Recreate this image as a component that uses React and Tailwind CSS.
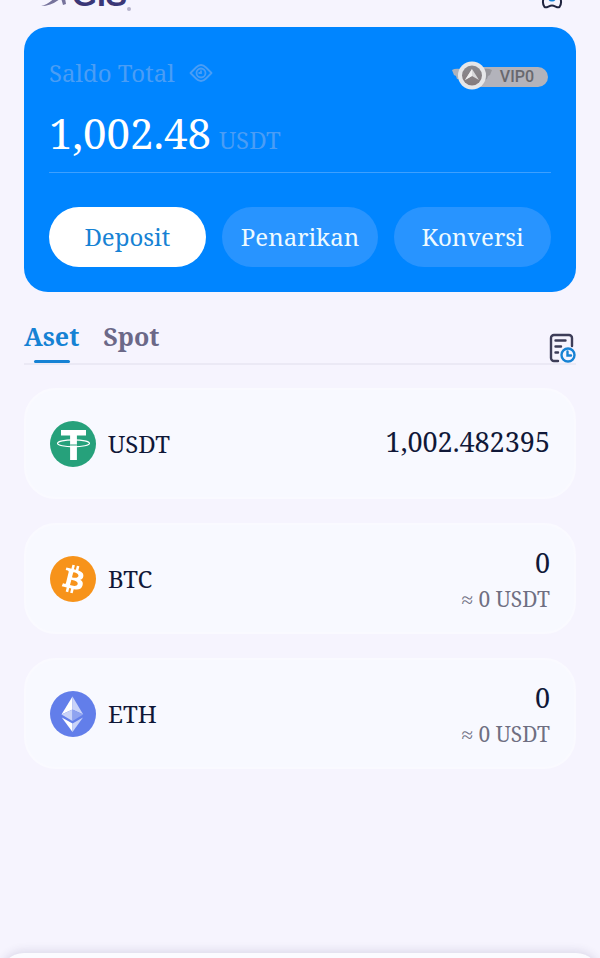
import React, { useState } from 'react';

const UsdtIcon = () => (
  <svg viewBox="0 0 46 46" className="size-[46px]" aria-hidden="true">
    <circle cx="23" cy="23" r="23" fill="#26a17b" />
    <path d="M11 9h25v5.500h-9.100V39h-6.800V14.500H11z" fill="#fff" />
    <ellipse cx="23.500" cy="22.300" rx="16" ry="3.500" fill="none" stroke="#fff" strokeWidth="1.200" />
    <path d="M20.100 24h6.800" stroke="#26a17b" strokeWidth="1" />
  </svg>
);

const BtcIcon = () => (
  <svg viewBox="0 0 32 32" className="size-[46px]" aria-hidden="true">
    <circle cx="16" cy="16" r="16" fill="#f7931a" />
    <path
      d="M23.189 14.02c.314-2.096-1.283-3.223-3.465-3.975l.708-2.84-1.728-.43-.69 2.765c-.454-.114-.92-.22-1.385-.326l.695-2.783L15.596 6l-.708 2.839c-.376-.086-.746-.17-1.104-.26l.002-.009-2.384-.595-.46 1.846s1.283.294 1.256.312c.7.175.826.638.805 1.006l-.806 3.235c.048.012.11.03.18.057l-.183-.045-1.13 4.532c-.086.212-.303.531-.793.41.018.025-1.256-.313-1.256-.313l-.858 1.978 2.25.561c.418.105.828.215 1.231.318l-.715 2.872 1.727.43.708-2.84c.472.127.93.245 1.378.357l-.706 2.828 1.728.43.715-2.866c2.948.558 5.164.333 6.097-2.333.752-2.146-.037-3.385-1.588-4.192 1.13-.26 1.98-1.003 2.207-2.538zm-3.95 5.538c-.533 2.147-4.148.986-5.32.695l.95-3.805c1.172.293 4.929.872 4.37 3.11zm.535-5.569c-.487 1.953-3.495.96-4.47.717l.86-3.45c.975.243 4.118.696 3.61 2.733z"
      fill="#fff"
    />
  </svg>
);

const EthIcon = () => (
  <svg viewBox="0 0 46 46" className="size-[46px]" aria-hidden="true">
    <circle cx="23" cy="23" r="23" fill="#627eea" />
    <path d="M22.500 5.500 11.500 23.500l11-5z" fill="#fff" />
    <path d="M22.500 5.500v13l10.700 5z" fill="#c9d3f8" />
    <path d="M11.500 23.500l11-5v11.500z" fill="#c9d3f8" />
    <path d="M33.200 23.500l-10.700-5v11.500z" fill="#8fa3f0" />
    <path d="M11.800 26.500l10.700 6v8.500z" fill="#fff" />
    <path d="M33 26.500l-10.500 6v8.500z" fill="#c9d3f8" />
  </svg>
);

const EyeIcon = () => (
  <svg viewBox="0 0 24 20" className="h-5 w-6" fill="none" stroke="currentColor" strokeWidth="1.800" aria-hidden="true">
    <path d="M1.500 10l5.500-5.500Q9.500 2 12 2t5 2.500l5.500 5.500-5.500 5.500Q14.500 18 12 18t-5-2.500z" strokeLinejoin="round" />
    <circle cx="12" cy="10" r="4.500" />
    <path d="M12 7.500V10H9.500" />
  </svg>
);

const SettingsIcon = () => (
  <svg viewBox="0 0 24 24" className="size-6" fill="none" aria-hidden="true">
    <path
      d="M12 2.500c3 0 5.500-2 7.500-.5 1.500 2 2 5 .5 8 1.500 4 1 8-.5 10-2 1.500-4.500-1.500-7.500-1.500s-5.500 3-7.500 1.500c-1.500-2-2-6-.5-10-1.500-3-1-6 .5-8 2-1.500 4.500.5 7.500.5z"
      stroke="#20243f"
      strokeWidth="2"
    />
    <circle cx="12" cy="10.500" r="3" stroke="#1682d4" strokeWidth="2" />
  </svg>
);

const HistoryIcon = () => (
  <svg viewBox="0 0 27 30" className="h-[30px] w-[27px]" fill="none" strokeWidth="2.400" strokeLinecap="round" aria-hidden="true">
    <g stroke="#3d3d58">
      <path d="M9 28H5a3 3 0 0 1-3-3V5a3 3 0 0 1 3-3h15a3 3 0 0 1 3 3v8" />
      <path d="M6.500 7.500h10M6.500 13.500H12M6.500 19.500H9" />
    </g>
    <g stroke="#1682d4">
      <circle cx="19" cy="22" r="6.500" />
      <path d="M18.500 18.500v4h3.500" />
    </g>
  </svg>
);

const VipBadge = () => (
  <div className="relative mr-[3px] mb-0.5 flex h-5 w-[84px] items-center justify-end rounded-full bg-[#b3b3bb] pr-3.5">
    <svg viewBox="0 0 42 30" className="absolute -top-1.5 -left-3 h-[30px] w-[42px]" aria-hidden="true">
      <defs>
        <linearGradient id="medal" x1="0" y1="0" x2="0" y2="1">
          <stop offset="0" stopColor="#8a8a90" />
          <stop offset="1" stopColor="#857b7c" />
        </linearGradient>
      </defs>
      <path d="M0 9q3-2 9-1l1 11-5-1-1-3-2-1z" fill="#aeb2bb" />
      <path d="M40 9q-4-2-9-1l-1 12 5-2 1-3 2-1z" fill="#96969c" />
      <circle cx="20" cy="14.500" r="14" fill="#e6e7e9" />
      <circle cx="20" cy="14.500" r="10" fill="url(#medal)" />
      <path d="M20 8l7 11-7-4-7 4z" fill="#d9d9db" />
      <path d="M20 8v7l-7 4z" fill="#efeff0" />
    </svg>
    <span className="font-['Roboto',sans-serif] text-[16px] leading-5 font-medium text-[#68686e]">VIP0</span>
  </div>
);

const assets = [
  { symbol: 'USDT', amount: '1,002.482395', value: null, Icon: UsdtIcon },
  { symbol: 'BTC', amount: '0', value: '≈ 0 USDT', Icon: BtcIcon },
  { symbol: 'ETH', amount: '0', value: '≈ 0 USDT', Icon: EthIcon },
];

const actions = ['Deposit', 'Penarikan', 'Konversi'];
const tabs = ['Aset', 'Spot'];

const App = () => {
  const [activeTab, setActiveTab] = useState('Aset');

  return (
    <div className="min-h-screen bg-[#f6f4fe] font-['Noto_Serif','Droid_Serif','Liberation_Serif',serif] text-[#101838]">
      <header className="flex h-[27px] items-end justify-between overflow-hidden pr-9 pb-4 pl-10">
        <div className="flex items-end">
          <svg viewBox="0 0 32 32" className="size-8" aria-hidden="true">
            <path d="M1 27Q12 25 23 8l3 17-3 1-2-7Q12 27 1 27z" fill="#77739c" />
          </svg>
          <span className="font-['Liberation_Sans',sans-serif] text-[32px] leading-8 font-bold text-[#3b3777]">GIS</span>
          <span className="size-1 rounded-full bg-[#b4b1cc]" />
        </div>
        <button type="button" aria-label="Pengaturan">
          <SettingsIcon />
        </button>
      </header>

      <main className="px-6 pb-20">
        <section className="rounded-3xl bg-[#0085ff] px-[25px] pt-[30px] pb-[25px]">
          <div className="flex items-end justify-between">
            <div className="flex items-center gap-3.5 text-[#4a9df5]">
              <span className="text-[24px] leading-8">Saldo Total</span>
              <button type="button" aria-label="Sembunyikan saldo">
                <EyeIcon />
              </button>
            </div>
            <VipBadge />
          </div>
          <div className="flex items-baseline gap-2 border-b border-[#3da0ff] pt-[18px] pb-[13px]">
            <span className="text-[42px] leading-[52px] text-white">1,002.48</span>
            <span className="text-[24px] leading-8 text-[#4a9df5]">USDT</span>
          </div>
          <div className="mt-[34px] grid grid-cols-3 gap-4">
            {actions.map((action) => (
              <button
                key={action}
                type="button"
                className={`h-[60px] rounded-full text-[24px] ${
                  action === 'Deposit' ? 'bg-white text-[#1682d4]' : 'bg-[#2894ff] text-[#eefaff]'
                }`}
              >
                {action}
              </button>
            ))}
          </div>
        </section>

        <div className="mt-6 flex items-end justify-between border-b-2 border-[#ebe9f5]">
          <div className="flex gap-6" role="tablist">
            {tabs.map((tab) => (
              <button
                key={tab}
                type="button"
                role="tab"
                aria-selected={activeTab === tab}
                onClick={() => setActiveTab(tab)}
                className={`flex flex-col items-center text-[25px] leading-10 font-bold ${
                  activeTab === tab ? 'text-[#1682d4]' : 'text-[#6b6888]'
                }`}
              >
                {tab}
                <span className={`mt-1 h-[3px] w-9 rounded-full ${activeTab === tab ? 'bg-[#1682d4]' : ''}`} />
              </button>
            ))}
          </div>
          <button type="button" aria-label="Riwayat">
            <HistoryIcon />
          </button>
        </div>

        <ul className="mt-[23px] flex flex-col gap-6">
          {assets.map(({ symbol, amount, value, Icon }) => (
            <li
              key={symbol}
              className="flex h-[111px] items-center justify-between rounded-[32px] border-2 border-[#fafaff] bg-[#f8f9ff] px-6"
            >
              <div className="flex items-center gap-3">
                <Icon />
                <span className="text-[24px] leading-8">{symbol}</span>
              </div>
              <div className="text-right">
                <div className="mb-1 text-[27px] leading-9">{amount}</div>
                {value && <div className="text-[21px] leading-7 text-[#6f6f82]">{value}</div>}
              </div>
            </li>
          ))}
        </ul>
      </main>

      <nav className="fixed inset-x-0 -bottom-[59px] h-16 rounded-t-3xl bg-[#fbfbff] shadow-[0_-2px_10px_rgba(60,50,100,0.14)]" />
    </div>
  );
};

export default App;
